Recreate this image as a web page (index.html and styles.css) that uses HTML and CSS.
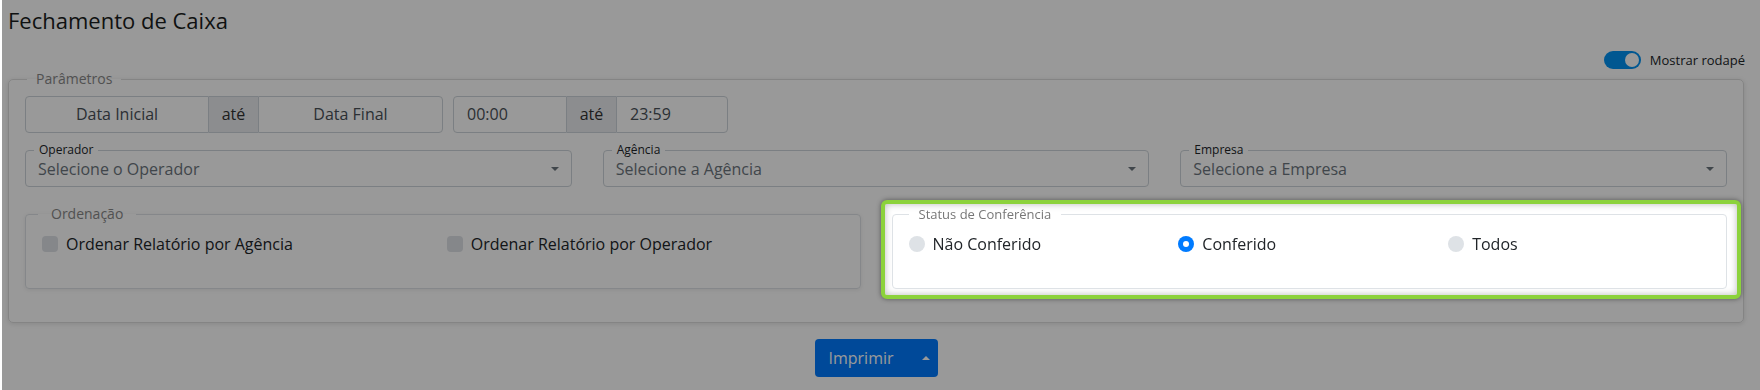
FILE: index.html
```html
<!DOCTYPE html>
<html lang="pt-BR">
<head>
<meta charset="utf-8">
<title>Fechamento de Caixa</title>
<link rel="stylesheet" href="styles.css">
</head>
<body>
<div class="page">
  <h1 class="title">Fechamento de Caixa</h1>
  <div class="toolbar">
    <span class="switch"><span class="knob"></span></span>
    <span class="switch-label">Mostrar rodapé</span>
  </div>
  <fieldset class="params">
    <legend class="legend legend-params">Parâmetros</legend>
    <div class="row-inputs">
      <div class="input-group">
        <div class="inp inp-date1 center">Data Inicial</div>
        <div class="addon">até</div>
        <div class="inp inp-date2 center">Data Final</div>
      </div>
      <div class="input-group">
        <div class="inp inp-time1">00:00</div>
        <div class="addon">até</div>
        <div class="inp inp-time2">23:59</div>
      </div>
    </div>
    <div class="row-selects">
      <div class="select">
        <span class="float-label">Operador</span>
        <span class="placeholder">Selecione o Operador</span>
        <span class="caret-down"></span>
      </div>
      <div class="select">
        <span class="float-label">Agência</span>
        <span class="placeholder">Selecione a Agência</span>
        <span class="caret-down"></span>
      </div>
      <div class="select">
        <span class="float-label">Empresa</span>
        <span class="placeholder">Selecione a Empresa</span>
        <span class="caret-down"></span>
      </div>
    </div>
    <div class="row-groups">
      <fieldset class="group">
        <legend class="legend legend-ord">Ordenação</legend>
        <div class="opts opts-2">
          <label class="opt"><span class="check"></span>Ordenar Relatório por Agência</label>
          <label class="opt"><span class="check"></span>Ordenar Relatório por Operador</label>
        </div>
      </fieldset>
      <div class="highlight">
        <fieldset class="group group-status">
          <legend class="legend legend-status">Status de Conferência</legend>
          <div class="opts opts-3">
            <label class="opt"><span class="radio"></span>Não Conferido</label>
            <label class="opt"><span class="radio radio-on"></span>Conferido</label>
            <label class="opt"><span class="radio"></span>Todos</label>
          </div>
        </fieldset>
      </div>
    </div>
  </fieldset>
  <div class="actions">
    <button class="btn-print" type="button">Imprimir<span class="caret-up"></span></button>
  </div>
</div>
<div class="overlay"></div>
</body>
</html>
```

FILE: styles.css
```css
* { box-sizing: border-box; }
html, body { margin: 0; padding: 0; background: #fff; }
body {
  font-family: "Open Sans", "Noto Sans", sans-serif;
  color: #212529;
  width: 1760px;
  height: 390px;
  overflow: hidden;
}
.page {
  padding: 0 16px 0 8px;
}
.title {
  font-size: 22px;
  font-weight: 400;
  line-height: 28px;
  margin: 0;
  padding-top: 6px;
  height: 51px;
  color: #1a1d20;
}
.toolbar {
  display: flex;
  justify-content: flex-end;
  align-items: center;
  gap: 9px;
  height: 18px;
}
.switch {
  width: 37px;
  height: 18px;
  border-radius: 9px;
  background: #0092f2;
  display: flex;
  align-items: center;
  justify-content: flex-end;
  padding-right: 2px;
}
.knob {
  width: 14px;
  height: 14px;
  border-radius: 50%;
  background: #fff;
}
.switch-label {
  font-size: 13px;
  line-height: 18px;
  color: #212529;
  margin-right: -1px;
}
.params {
  margin: 0;
  border: 1px solid #dcdcdc;
  border-radius: 5px;
  padding: 0 16px 33px;
  box-shadow: 0 1px 5px rgba(0,0,0,0.12);
}
.legend {
  font-size: 14px;
  line-height: 20px;
  color: #888;
  padding: 0 9px;
}
.legend-params { margin-left: 2px; margin-top: -1px; }
.row-inputs {
  display: flex;
  gap: 10px;
  margin-top: 7px;
}
.input-group {
  display: flex;
  height: 37px;
}
.inp, .addon {
  border: 1px solid #ced4da;
  font-size: 16px;
  line-height: 35px;
  color: #495057;
}
.inp { padding: 0 13px; background: #fff; }
.center { text-align: center; }
.input-group > :first-child { border-radius: 4px 0 0 4px; }
.input-group > :last-child { border-radius: 0 4px 4px 0; }
.addon {
  background: #e9ecef;
  width: 49px;
  text-align: center;
  border-left: 0;
  border-right: 0;
  color: #333;
}
.inp-date1 { width: 184px; }
.inp-date2 { width: 185px; }
.inp-time1 { width: 114px; }
.inp-time2 { width: 112px; }
.row-selects {
  display: grid;
  grid-template-columns: 1fr 1fr 1fr;
  gap: 31px;
  margin-top: 17px;
}
.select {
  position: relative;
  height: 37px;
  border: 1px solid #ced4da;
  border-radius: 4px;
  padding: 0 12px;
  display: flex;
  align-items: center;
}
.float-label {
  position: absolute;
  left: 8px;
  top: -9px;
  padding: 0 5px 0 5px;
  background: #fff;
  font-size: 12px;
  line-height: 16px;
  color: #212529;
}
.placeholder {
  font-size: 16px;
  line-height: 24px;
  color: #6c757d;
  flex: 1;
}
.caret-down {
  width: 0;
  height: 0;
  border-left: 4px solid transparent;
  border-right: 4px solid transparent;
  border-top: 4px solid #6c757d;
}
.row-groups {
  display: grid;
  grid-template-columns: 1fr 1fr;
  gap: 31px;
  margin-top: 17px;
}
.group {
  margin: 0;
  border: 1px solid #dee2e6;
  border-radius: 4px;
  padding: 8px 8px 32px 16px;
  min-width: 0;
  box-shadow: 0 1px 4px rgba(0,0,0,0.08);
}
.legend-ord { margin-left: -4px; padding: 0 13px; }
.legend-status { margin-left: 0; padding: 0 10px; color: #777; font-size: 13px; }
.opts { display: grid; }
.opts-2 { grid-template-columns: 1fr 1fr; }
.opts-3 { grid-template-columns: 1fr 1fr 1fr; }
.opt {
  display: flex;
  align-items: center;
  gap: 8px;
  font-size: 16px;
  line-height: 24px;
  color: #212529;
}
.check {
  width: 16px;
  height: 16px;
  border-radius: 4px;
  background: #dee2e6;
}
.radio {
  width: 16px;
  height: 16px;
  border-radius: 50%;
  background: #dee2e6;
}
.radio-on {
  background: #007bff;
  display: flex;
  align-items: center;
  justify-content: center;
}
.radio-on::after {
  content: "";
  width: 6px;
  height: 6px;
  border-radius: 50%;
  background: #fff;
}
.highlight {
  position: relative;
  z-index: 20;
}
.highlight::before {
  content: "";
  position: absolute;
  left: -11px;
  right: -14px;
  top: -4px;
  bottom: -10px;
  background: #fff;
  border: 4px solid #8cd23c;
  border-radius: 6px;
  box-shadow: 0 0 5px rgba(0,0,0,0.45), inset 0 0 7px rgba(0,0,0,0.28);
  z-index: -1;
}
.group-status { background: #fff; box-shadow: none; }
.actions {
  display: flex;
  justify-content: center;
  margin-top: 16px;
}
.btn-print {
  display: inline-flex;
  align-items: center;
  height: 38px;
  width: 123px;
  padding: 0 0 0 14px;
  border: 0;
  border-radius: 4px;
  background: #007bff;
  color: #fff;
  font-family: "Open Sans", "Noto Sans", sans-serif;
  font-size: 16px;
}
.caret-up {
  margin-left: 28px;
  width: 0;
  height: 0;
  border-left: 4px solid transparent;
  border-right: 4px solid transparent;
  border-bottom: 4px solid #fff;
}
.overlay {
  position: fixed;
  left: 2px;
  top: 0;
  right: 0;
  bottom: 0;
  background: rgba(0,0,0,0.4);
  z-index: 10;
}
```
